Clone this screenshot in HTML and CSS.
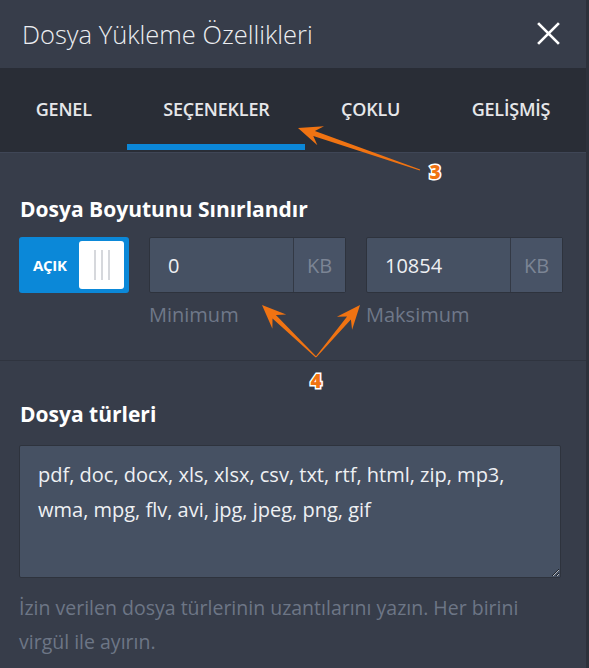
FILE: index.html
```html
<!DOCTYPE html>
<html lang="tr">
<head>
    <meta charset="UTF-8">
    <meta name="viewport" content="width=device-width, initial-scale=1.0">
    <title>Dosya Yükleme Özellikleri</title>
    <link rel="stylesheet" href="styles.css">
</head>
<body>
    <div class="panel">
        <header class="head">
            <h1>Dosya Yükleme Özellikleri</h1>
            <button class="close" aria-label="Kapat">
                <svg viewBox="0 0 24 24"><path d="M2 2L22 22M22 2L2 22"/></svg>
            </button>
        </header>

        <nav class="tabs">
            <a href="#" class="tab">GENEL</a>
            <a href="#" class="tab active">SEÇENEKLER</a>
            <a href="#" class="tab">ÇOKLU</a>
            <a href="#" class="tab">GELİŞMİŞ</a>
        </nav>

        <section class="group">
            <h2>Dosya Boyutunu Sınırlandır</h2>
            <div class="size-row">
                <div class="toggle">
                    <span>AÇIK</span>
                    <div class="knob"><i></i><i></i><i></i></div>
                </div>
                <div class="field">
                    <div class="input-group">
                        <input type="text" value="0">
                        <span class="addon">KB</span>
                    </div>
                    <label>Minimum</label>
                </div>
                <div class="field">
                    <div class="input-group">
                        <input type="text" value="10854">
                        <span class="addon">KB</span>
                    </div>
                    <label>Maksimum</label>
                </div>
            </div>
        </section>

        <section class="group types">
            <h2>Dosya türleri</h2>
            <textarea>pdf, doc, docx, xls, xlsx, csv, txt, rtf, html, zip, mp3, wma, mpg, flv, avi, jpg, jpeg, png, gif</textarea>
            <p class="hint">İzin verilen dosya türlerinin uzantılarını yazın. Her birini virgül ile ayırın.</p>
        </section>

        <!-- annotation arrows -->
        <svg class="notes" viewBox="0 0 586 668">
            <polygon points="298,128 317.4,145.3 313.3,135.9 419.8,170.5 420.2,169.5 314.9,131.1 324,126.3"/>
            <polygon points="262,305 272.4,328.8 272.5,318.6 315.7,357.4 316.3,356.6 275.9,315 286.2,314.4"/>
            <polygon points="360,305 336.9,316.8 347.1,316.4 315.6,356.7 316.4,357.3 350.9,319.6 352.1,329.8"/>
            <text x="435" y="179">3</text>
            <text x="316" y="388">4</text>
        </svg>
    </div>
</body>
</html>
```

FILE: styles.css
```css
* {
    margin: 0;
    padding: 0;
    box-sizing: border-box;
}
body {
    background: #2d313b;
    font-family: "Open Sans", "Noto Sans", sans-serif;
    color: #ffffff;
}
.panel {
    position: relative;
    width: 586px;
    min-height: 668px;
    background: #373d4a;
}
.head {
    height: 68px;
    display: flex;
    align-items: center;
    justify-content: space-between;
    padding: 0 25px 0 22px;
}
.head h1 {
    font-size: 25.5px;
    font-weight: 300;
    color: #eceef1;
}
.close {
    background: none;
    border: none;
    width: 26px;
    height: 26px;
    cursor: pointer;
}
.close svg {
    width: 25px;
    height: 25px;
    stroke: #ffffff;
    stroke-width: 2.6;
    fill: none;
}
.tabs {
    display: flex;
    height: 85px;
    padding-bottom: 2px;
    background: #292d36;
    border-bottom: 1px solid #3f4656;
}
.tab {
    flex: auto;
    display: flex;
    align-items: center;
    justify-content: center;
    padding-top: 6px;
    font-size: 18px;
    font-weight: 600;
    letter-spacing: -0.2px;
    color: #e6e7ea;
    text-decoration: none;
    border-bottom: 6px solid transparent;
}
.tab.active {
    border-bottom-color: #0b87d8;
}
.group {
    padding: 42px 23px 31px 19px;
    border-bottom: 1px solid #2f343f;
}
.group h2 {
    font-size: 21px;
    font-weight: 700;
    line-height: 28px;
    margin-left: 1px;
    margin-bottom: 14px;
}
.size-row {
    display: flex;
    align-items: flex-start;
    gap: 20px;
}
.toggle {
    flex-shrink: 0;
    width: 110px;
    height: 56px;
    padding: 4px 5px 4px 14px;
    display: flex;
    align-items: center;
    justify-content: space-between;
    background: #0b88d8;
    border-radius: 3px;
}
.toggle span {
    font-size: 15px;
    font-weight: 700;
    letter-spacing: -0.3px;
}
.knob {
    width: 45px;
    height: 48px;
    background: #ffffff;
    border-radius: 3px;
    display: flex;
    justify-content: center;
    align-items: center;
    gap: 5px;
}
.knob i {
    width: 2px;
    height: 30px;
    background: #d6d8dc;
}
.field {
    flex-shrink: 0;
    width: 197px;
}
.input-group {
    display: flex;
    height: 56px;
    border: 1px solid #2e333d;
    border-radius: 2px;
    background: #465163;
}
.input-group input {
    flex: 1;
    min-width: 0;
    padding: 0 18px;
    background: none;
    border: none;
    font-family: inherit;
    font-size: 20px;
    color: #eef0f3;
}
.addon {
    width: 52px;
    display: flex;
    align-items: center;
    justify-content: center;
    border-left: 1px solid #333945;
    background: #485366;
    font-size: 20px;
    color: #7c8595;
}
.field label {
    display: block;
    margin-top: 8px;
    font-size: 20px;
    line-height: 28px;
    color: #6f7889;
}
.types {
    padding-top: 39px;
    border-bottom: none;
}
.types h2 {
    margin-bottom: 17px;
}
textarea {
    display: block;
    width: 542px;
    height: 133px;
    padding: 11px 18px;
    background: #465163;
    border: 1px solid #2e333d;
    border-radius: 2px;
    font-family: inherit;
    font-size: 20px;
    line-height: 35px;
    color: #eef0f3;
    resize: vertical;
}
.hint {
    margin-top: 13px;
    font-size: 19.5px;
    line-height: 34px;
    color: #6d7686;
}
.notes {
    position: absolute;
    left: 0;
    top: 0;
    width: 586px;
    height: 668px;
    pointer-events: none;
}
.notes polygon {
    fill: #f07312;
}
.notes text {
    font-family: "Open Sans", sans-serif;
    font-size: 19px;
    font-weight: 800;
    text-anchor: middle;
    fill: #f07312;
    stroke: #ffffff;
    stroke-width: 3px;
    paint-order: stroke;
}
```
